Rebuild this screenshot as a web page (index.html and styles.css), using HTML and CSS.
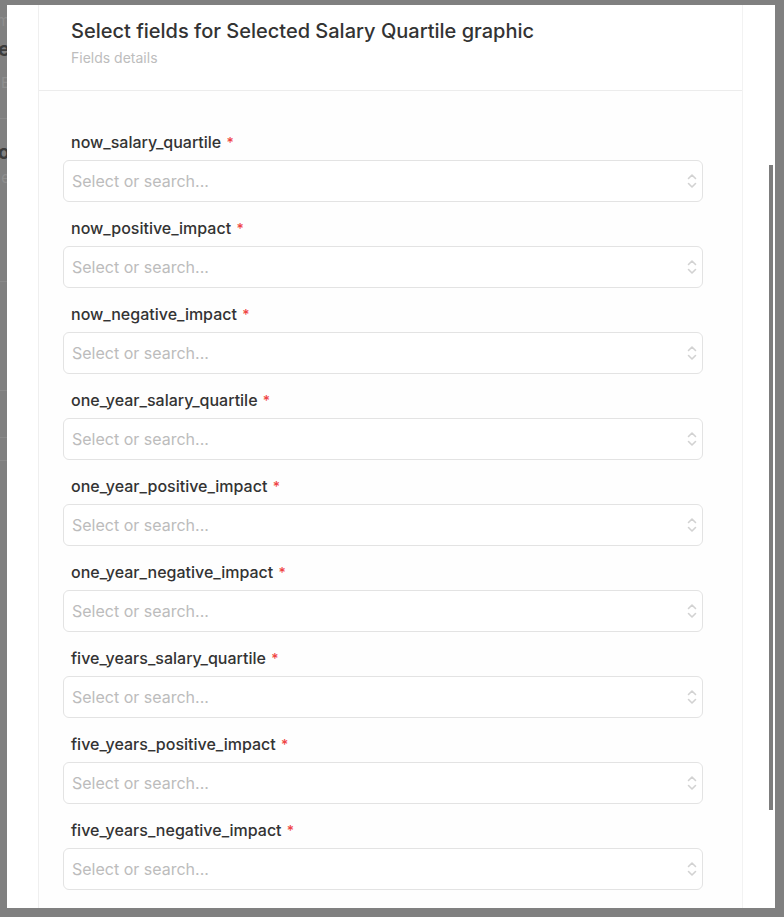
FILE: index.html
```html
<!DOCTYPE html>
<html lang="en">
<head>
    <meta charset="UTF-8">
    <meta name="viewport" content="width=device-width, initial-scale=1.0">
    <title>Select fields</title>
    <link rel="stylesheet" href="styles.css">
</head>
<body>
    <div id="screen">
        <!-- page behind the dialog, only a sliver shows -->
        <div id="behind">
            <div class="bg-row faint">m</div>
            <div class="bg-row bold">re</div>
            <div class="bg-row faint">E</div>
            <div class="bg-line"></div>
            <div class="bg-row bold small">o</div>
            <div class="bg-row faint small">e</div>
            <div class="bg-line tall"></div>
            <div class="bg-line mid"></div>
            <div class="bg-line low"></div>
            <div class="bg-line"></div>
        </div>

        <div id="modal">
            <div class="column">
                <div class="head">
                    <h2 class="title">Select fields for Selected Salary Quartile graphic</h2>
                    <p class="subtitle">Fields details</p>
                </div>

                <div class="fields" id="fields"></div>
            </div>
            <div class="thumb"></div>
        </div>
    </div>

    <script>
        var names = [
            "now_salary_quartile",
            "now_positive_impact",
            "now_negative_impact",
            "one_year_salary_quartile",
            "one_year_positive_impact",
            "one_year_negative_impact",
            "five_years_salary_quartile",
            "five_years_positive_impact",
            "five_years_negative_impact"
        ]

        var chevrons = '<svg class="arrows" width="12" height="18" viewBox="0 0 12 18">' +
            '<path d="M2.5 6.5 L6 3 L9.5 6.5" fill="none" stroke="#d2d2d2" stroke-width="1.6" stroke-linecap="round" stroke-linejoin="round"/>' +
            '<path d="M2.5 11.5 L6 15 L9.5 11.5" fill="none" stroke="#d2d2d2" stroke-width="1.6" stroke-linecap="round" stroke-linejoin="round"/>' +
            '</svg>'

        var html = ""
        for (var i = 0; i < names.length; i++) {
            html += '<div class="field">' +
                '<label class="label">' + names[i] + ' <span class="req">*</span></label>' +
                '<div class="select"><span class="placeholder">Select or search...</span>' + chevrons + '</div>' +
                '</div>'
        }
        document.getElementById('fields').innerHTML = html
    </script>
</body>
</html>
```

FILE: styles.css
```css
body {
    margin: 0;
    background-color: #808080;
    font-family: Inter, "Noto Sans", sans-serif;
    overflow: hidden;
}

#screen {
    display: flex;
    height: 917px;
}

#behind {
    width: 7px;
    flex-shrink: 0;
    overflow: hidden;
    display: flex;
    flex-direction: column;
    align-items: flex-end;
}

.bg-row {
    white-space: nowrap;
    margin-right: -3px;
    font-size: 20px;
    line-height: 26px;
}

.bg-row.faint {
    color: #8f8f8f;
    font-size: 15px;
    margin-top: 8px;
}

.bg-row.bold {
    color: #3c3c3c;
    font-weight: 700;
    margin-top: 2px;
}

.bg-row.small {
    margin-top: 20px;
}

.bg-row.faint.small {
    margin-top: 0;
}

.bg-line {
    width: 100%;
    height: 1px;
    background: #8a8a8a;
    margin-top: 22px;
}

.bg-line.tall {
    margin-top: 90px;
}

.bg-line.mid {
    margin-top: 108px;
}

.bg-line.low {
    margin-top: 46px;
}

#modal {
    position: relative;
    margin-top: 5px;
    width: 768px;
    height: 903px;
    background: #ffffff;
    overflow: hidden;
}

.column {
    margin-left: 31px;
    width: 703px;
    min-height: 100%;
    border-left: 1px solid #efefef;
    border-right: 1px solid #f2f2f2;
    background: #fefefe;
}

.head {
    background: #ffffff;
    padding: 13px 33px 22px 32px;
    border-bottom: 1px solid #ececec;
}

.title {
    margin: 0;
    font-size: 20px;
    line-height: 26px;
    font-weight: 500;
    color: #333333;
}

.subtitle {
    margin: 4px 0 0 0;
    font-size: 14px;
    line-height: 20px;
    color: #bdbdbd;
}

.fields {
    padding: 41px 39px 0 24px;
}

.field {
    margin-bottom: 16px;
}

.label {
    display: block;
    height: 20px;
    padding-left: 8px;
    font-size: 16px;
    line-height: 20px;
    font-weight: 500;
    color: #333333;
    margin-bottom: 8px;
}

.req {
    color: #ef4444;
    font-size: 14px;
    line-height: 1;
    margin-left: 1px;
}

.select {
    box-sizing: border-box;
    height: 42px;
    border: 1px solid #e3e3e3;
    border-radius: 6px;
    background: #ffffff;
    display: flex;
    align-items: center;
    justify-content: space-between;
    padding: 0 4px 0 8px;
}

.placeholder {
    font-size: 16px;
    color: #bcbcbc;
}

.arrows {
    display: block;
}

.thumb {
    position: absolute;
    right: 2px;
    top: 160px;
    width: 4px;
    height: 645px;
    background: #7d7d7d;
}
```
